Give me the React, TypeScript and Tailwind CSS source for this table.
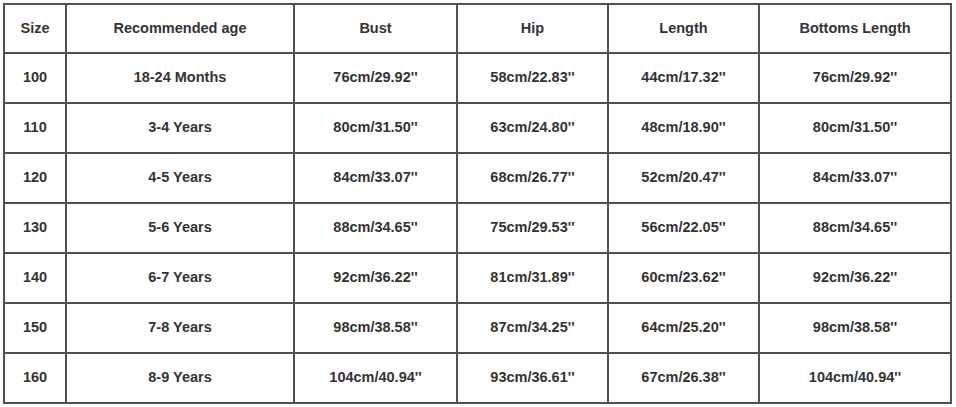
const headers = ["Size", "Recommended age", "Bust", "Hip", "Length", "Bottoms Length"];

const rows: string[][] = [
  ["100", "18-24 Months", "76cm/29.92''", "58cm/22.83''", "44cm/17.32''", "76cm/29.92''"],
  ["110", "3-4 Years", "80cm/31.50''", "63cm/24.80''", "48cm/18.90''", "80cm/31.50''"],
  ["120", "4-5 Years", "84cm/33.07''", "68cm/26.77''", "52cm/20.47''", "84cm/33.07''"],
  ["130", "5-6 Years", "88cm/34.65''", "75cm/29.53''", "56cm/22.05''", "88cm/34.65''"],
  ["140", "6-7 Years", "92cm/36.22''", "81cm/31.89''", "60cm/23.62''", "92cm/36.22''"],
  ["150", "7-8 Years", "98cm/38.58''", "87cm/34.25''", "64cm/25.20''", "98cm/38.58''"],
  ["160", "8-9 Years", "104cm/40.94''", "93cm/36.61''", "67cm/26.38''", "104cm/40.94''"],
];

const widths = [62, 228, 163, 151, 151, 192];

export default function App() {
  return (
    <div className="w-[956px] h-[407px] bg-white pt-[3px] pl-[3px]">
      <table
        className="table-fixed border-collapse text-[14.5px] font-bold text-[#333] w-[949px]"
        style={{ fontFamily: '"Liberation Sans", Arial, sans-serif' }}
      >
        <colgroup>
          {widths.map((w, i) => (
            <col key={i} style={{ width: w }} />
          ))}
        </colgroup>
        <thead>
          <tr className="h-[49px]">
            {headers.map((h) => (
              <th key={h} className="border-2 border-[#505050] text-center font-bold">
                {h}
              </th>
            ))}
          </tr>
        </thead>
        <tbody>
          {rows.map((r) => (
            <tr key={r[0]} className="h-[50px]">
              {r.map((c, i) => (
                <td key={i} className="border-2 border-[#505050] text-center">
                  {c}
                </td>
              ))}
            </tr>
          ))}
        </tbody>
      </table>
    </div>
  );
}
